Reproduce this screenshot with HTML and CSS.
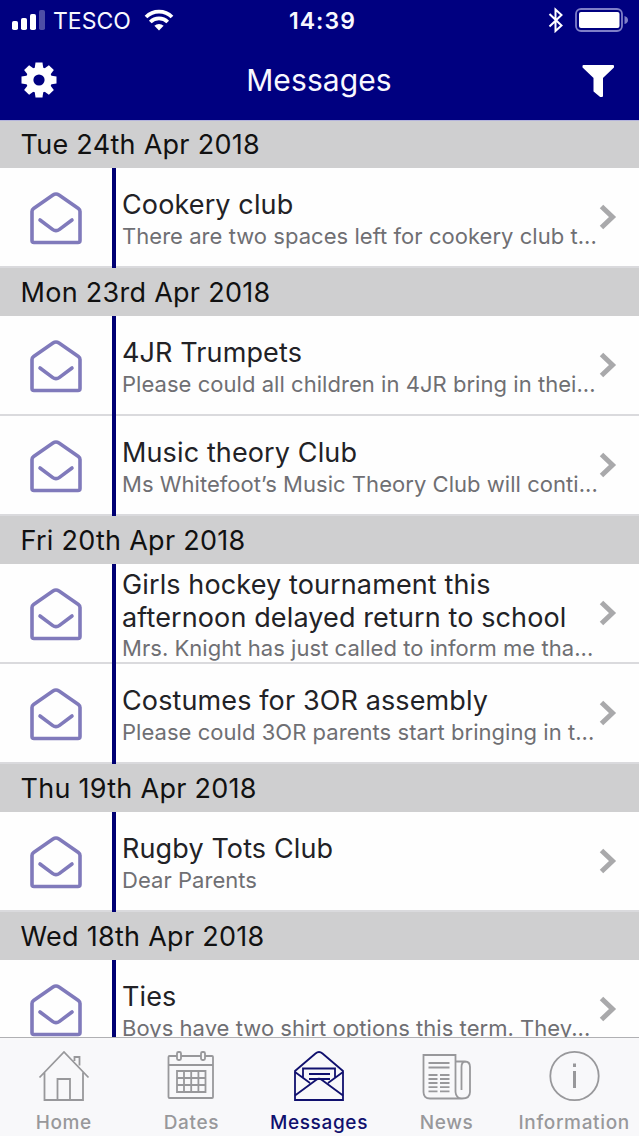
FILE: index.html
```html
<!DOCTYPE html>
<html lang="en">
  <head>
    <meta charset="utf-8">
    <title>Messages</title>
    <link rel="stylesheet" href="styles.css">
  </head>

  <body>
    <svg class="symbols">
      <symbol id="envelope" viewBox="0 0 52 54">
        <path d="M2 20.5 Q2 18.5 3.6 17.4 L23 4 Q26 2 29 4 L48.4 17.4 Q50 18.5 50 20.5 V49.5 Q50 51.5 48 51.5 H4 Q2 51.5 2 49.5 Z"/>
        <path d="M10 29 L22.5 38.4 Q26 41 29.5 38.4 L42 29"/>
      </symbol>
      <symbol id="chevron" viewBox="0 0 18 26">
        <path d="M2.5 2.5 L13.5 13 L2.5 23.5"/>
      </symbol>
    </svg>

    <div class="header">
      <div class="status-bar">
        <div class="carrier">
          <svg width="34" height="22" viewBox="0 0 34 22" fill="#fff">
            <rect x="0" y="12" width="6" height="9" rx="1.8"/>
            <rect x="9" y="9" width="6" height="12" rx="1.8"/>
            <rect x="18" y="5" width="6" height="16" rx="1.8"/>
            <rect x="27" y="1" width="6" height="20" rx="1.8" opacity=".3"/>
          </svg>
          <span class="carrier-name">TESCO</span>
          <svg width="30" height="22" viewBox="0 0 30 22" fill="none" stroke="#fff" stroke-width="3.8">
            <path d="M2 8 A18.5 18.5 0 0 1 28 8"/>
            <path d="M6.3 13 A12.4 12.4 0 0 1 23.7 13"/>
            <path d="M15 21.5 L10.4 16.8 A6.6 6.6 0 0 1 19.6 16.8 Z" fill="#fff" stroke="none"/>
          </svg>
        </div>
        <div class="time">14:39</div>
        <div class="power">
          <svg width="16" height="26" viewBox="0 0 16 26" fill="none" stroke="#fff" stroke-width="2">
            <path d="M1.5 7 L13.5 18.5 L7.5 24 V2.5 L13.5 8 L1.5 19.5"/>
          </svg>
          <svg width="53" height="24" viewBox="0 0 53 24">
            <rect x="1" y="1" width="46" height="22" rx="5" fill="none" stroke="#7f7fc8" stroke-width="1.8"/>
            <rect x="4" y="4" width="40.5" height="16" rx="2" fill="#fff"/>
            <path d="M49.5 8 Q53 9 53 12 Q53 15 49.5 16 Z" fill="#7f7fc8"/>
          </svg>
        </div>
      </div>
      <div class="nav-bar">
        <svg width="36" height="36" viewBox="-18 -18 36 36" fill="#fff">
          <path d="M-4.4 -11 L-3.5 -17.5 H3.5 L4.4 -11 V11 L3.5 17.5 H-3.5 L-4.4 11 Z"/>
          <path d="M-4.4 -11 L-3.5 -17.5 H3.5 L4.4 -11 V11 L3.5 17.5 H-3.5 L-4.4 11 Z" transform="rotate(45)"/>
          <path d="M-4.4 -11 L-3.5 -17.5 H3.5 L4.4 -11 V11 L3.5 17.5 H-3.5 L-4.4 11 Z" transform="rotate(90)"/>
          <path d="M-4.4 -11 L-3.5 -17.5 H3.5 L4.4 -11 V11 L3.5 17.5 H-3.5 L-4.4 11 Z" transform="rotate(135)"/>
          <circle r="13"/>
          <circle r="5.6" fill="#000080"/>
        </svg>
        <h1 class="title">Messages</h1>
        <svg width="34" height="34" viewBox="0 0 34 34" fill="#fff" stroke="#fff" stroke-width="2" stroke-linejoin="round">
          <path d="M2.5 3 H32 V4 L21 14.5 V33 L19.5 33 L13.5 28 V14.5 L2.5 4 Z"/>
        </svg>
      </div>
    </div>

    <div class="list">
      <div class="date">Tue 24th Apr 2018</div>
      <div class="row">
        <svg class="envelope"><use href="#envelope"/></svg>
        <div class="bar"></div>
        <div class="text">
          <div class="subject">Cookery club</div>
          <div class="preview">There are two spaces left for cookery club t...</div>
        </div>
        <svg class="chevron"><use href="#chevron"/></svg>
      </div>

      <div class="date">Mon 23rd Apr 2018</div>
      <div class="row">
        <svg class="envelope"><use href="#envelope"/></svg>
        <div class="bar"></div>
        <div class="text">
          <div class="subject">4JR Trumpets</div>
          <div class="preview">Please could all children in 4JR bring in thei...</div>
        </div>
        <svg class="chevron"><use href="#chevron"/></svg>
      </div>
      <div class="row">
        <svg class="envelope"><use href="#envelope"/></svg>
        <div class="bar"></div>
        <div class="text">
          <div class="subject">Music theory Club</div>
          <div class="preview">Ms Whitefoot’s Music Theory Club will conti...</div>
        </div>
        <svg class="chevron"><use href="#chevron"/></svg>
      </div>

      <div class="date">Fri 20th Apr 2018</div>
      <div class="row">
        <svg class="envelope"><use href="#envelope"/></svg>
        <div class="bar"></div>
        <div class="text two-line">
          <div class="subject">Girls hockey tournament this<br>afternoon delayed return to school</div>
          <div class="preview">Mrs. Knight has just called to inform me tha...</div>
        </div>
        <svg class="chevron"><use href="#chevron"/></svg>
      </div>
      <div class="row">
        <svg class="envelope"><use href="#envelope"/></svg>
        <div class="bar"></div>
        <div class="text">
          <div class="subject">Costumes for 3OR assembly</div>
          <div class="preview">Please could 3OR parents start bringing in t...</div>
        </div>
        <svg class="chevron"><use href="#chevron"/></svg>
      </div>

      <div class="date">Thu 19th Apr 2018</div>
      <div class="row">
        <svg class="envelope"><use href="#envelope"/></svg>
        <div class="bar"></div>
        <div class="text">
          <div class="subject">Rugby Tots Club</div>
          <div class="preview">Dear Parents</div>
        </div>
        <svg class="chevron"><use href="#chevron"/></svg>
      </div>

      <div class="date">Wed 18th Apr 2018</div>
      <div class="row">
        <svg class="envelope"><use href="#envelope"/></svg>
        <div class="bar"></div>
        <div class="text">
          <div class="subject">Ties</div>
          <div class="preview">Boys have two shirt options this term. They...</div>
        </div>
        <svg class="chevron"><use href="#chevron"/></svg>
      </div>
    </div>

    <div class="tab-bar">
      <div class="tab">
        <svg viewBox="0 0 52 52">
          <path d="M1.5 27.5 L26 2 L50.5 27.5 M6.5 22.5 V50 H45 V22.5 M19.5 50 V29 H32 V50 M36.5 11 V7 H41.5 V15.5"/>
        </svg>
        <span>Home</span>
      </div>
      <div class="tab">
        <svg viewBox="0 0 52 52">
          <path d="M12 6 H4.5 Q3.5 6 3.5 7 V47 Q3.5 48 4.5 48 H47 Q48 48 48 47 V7 Q48 6 47 6 H40 M16 6 H36 M3.5 15 H48"/>
          <rect x="12" y="2" width="4" height="8" rx="1.5"/>
          <rect x="36" y="2" width="4" height="8" rx="1.5"/>
          <path d="M12 21 H40.5 V42 H12 Z M12 28 H40.5 M12 35 H40.5 M19 21 V42 M26.2 21 V42 M33.4 21 V42"/>
        </svg>
        <span>Dates</span>
      </div>
      <div class="tab active">
        <svg viewBox="0 0 52 52">
          <path d="M2 50 V21 L22.5 3.5 Q26 .5 29.5 3.5 L50 21 V50 Z"/>
          <path d="M2 22 L17 33 M50 22 L35 33 M2 45.5 L23 30 Q26 27.5 29 30 L50 45.5 M10 27.5 V18.5 H42 V27.5 M16 24 H37 M16 29 H37"/>
        </svg>
        <span>Messages</span>
      </div>
      <div class="tab">
        <svg viewBox="0 0 52 52">
          <path d="M2.5 5 H34.5 V42 Q35 48.5 41 48.5 H9 Q2.5 48.5 2.5 42 Z"/>
          <path d="M34.5 11.5 H44 Q49 11.5 49 17 V42 Q49 48.5 41 48.5 M44 11.5 Q40.5 12 40.5 17 V40"/>
          <path d="M7.5 13 H28.5 M7.5 17.5 H28.5 M7.5 25 H16.5 M19 25 H28.5 M7.5 29 H16.5 M19 29 H28.5 M7.5 33 H16.5 M19 33 H28.5 M7.5 37.2 H16.5 M19 37.2 H28.5 M7.5 41.4 H16.5 M19 41.4 H28.5"/>
        </svg>
        <span>News</span>
      </div>
      <div class="tab">
        <svg viewBox="0 0 52 52">
          <circle cx="26.5" cy="26" r="24.2"/>
          <path d="M26.5 21 V38 M26.5 13.5 V17" stroke-width="3"/>
        </svg>
        <span>Information</span>
      </div>
    </div>
  </body>
</html>
```

FILE: styles.css
```css
* {
  box-sizing: border-box;
}
body {
  margin: 0;
  height: 1136px;
  display: flex;
  flex-direction: column;
  overflow: hidden;
  background-color: #fefefe;
  font-family: Inter, "Liberation Sans", sans-serif;
}
svg {
  display: block;
  flex-shrink: 0;
}
.symbols {
  display: none;
}

.header {
  flex: none;
  height: 121px;
  background-color: #000080;
  border-bottom: 1px solid #b4b4dc;
  color: #f8f8ff;
}
.status-bar {
  height: 40px;
  display: grid;
  grid-template-columns: 1fr auto 1fr;
  align-items: center;
  padding: 0 11px 0 12px;
}
.carrier {
  display: flex;
  align-items: center;
}
.carrier-name {
  width: 79px;
  margin: 2px 12px 0 7px;
  font-size: 23px;
  line-height: 26px;
}
.time {
  margin: 2px 0 0 5px;
  font-size: 23px;
  font-weight: 600;
  letter-spacing: 1.1px;
}
.power {
  display: flex;
  align-items: center;
  justify-content: flex-end;
  gap: 11px;
}
.nav-bar {
  height: 80px;
  display: flex;
  align-items: center;
  justify-content: space-between;
  padding: 0 24px 0 21px;
}
.title {
  margin: 0;
  font-size: 30px;
  font-weight: 400;
  letter-spacing: 0.1px;
}

.list {
  flex: 1;
  min-height: 0;
  overflow: hidden;
}
.date {
  height: 48px;
  padding-left: 20.5px;
  background-color: #cfcfd0;
  color: #111;
  font-size: 27px;
  line-height: 50px;
  letter-spacing: 0.28px;
}
.date:first-child {
  height: 47px;
  line-height: 48px;
}
.row {
  height: 100px;
  display: flex;
  align-items: center;
  background: linear-gradient(#dadadd, #dadadd) left bottom / 100% 2px no-repeat;
}
.envelope {
  width: 52px;
  height: 54px;
  margin: 0 30px;
  fill: none;
  stroke: #807abb;
  stroke-width: 3.6;
  stroke-linecap: round;
  stroke-linejoin: round;
}
.bar {
  width: 4px;
  height: 100px;
  background-color: #000073;
}
.text {
  flex: 1;
  min-width: 0;
  padding: 3px 0 0 6px;
  white-space: nowrap;
}
.subject {
  color: #222226;
  font-size: 27px;
  line-height: 33px;
  letter-spacing: 0.12px;
}
.preview {
  margin-top: 1px;
  color: #6f6f73;
  font-size: 22px;
  line-height: 29px;
  letter-spacing: 0.04px;
}
.two-line {
  padding-top: 2px;
}
.two-line .preview {
  margin-top: 0;
}
.chevron {
  width: 18px;
  height: 26px;
  margin: 0 22px 2px 0;
  fill: none;
  stroke: #a9a9ab;
  stroke-width: 5;
}

.tab-bar {
  flex: none;
  height: 99px;
  display: grid;
  grid-template-columns: repeat(5, 1fr);
  padding-right: 1px;
  background-color: #f8f8fa;
  border-top: 1px solid #b0b0b3;
  color: #98989b;
}
.tab {
  display: flex;
  flex-direction: column;
  align-items: center;
  padding-top: 12px;
  font-size: 19px;
  font-weight: 500;
  line-height: 24px;
  letter-spacing: 0.65px;
}
.tab svg {
  width: 52px;
  height: 52px;
  margin-bottom: 9px;
  fill: none;
  stroke: currentColor;
  stroke-width: 1.8;
}
.tab.active {
  color: #10106e;
}
```
